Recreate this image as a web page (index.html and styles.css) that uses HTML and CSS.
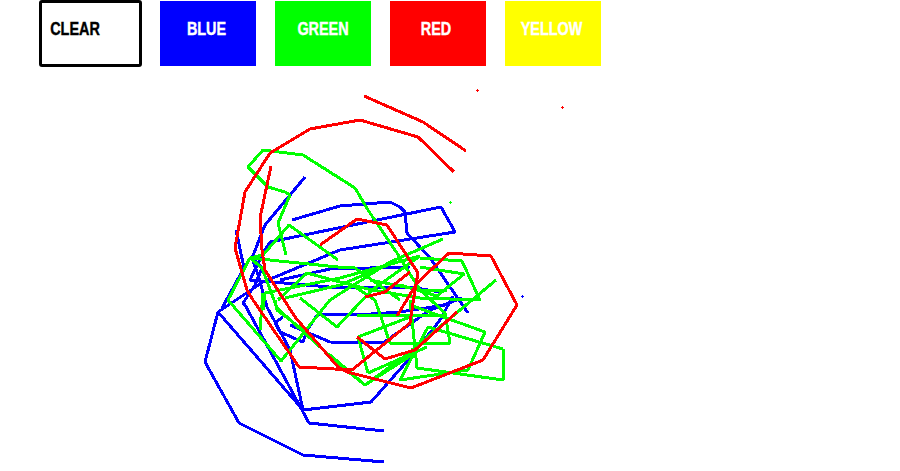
FILE: index.html
```html
<!DOCTYPE html>
<html lang="en">
<head>
    <meta charset="UTF-8">
    <meta name="viewport" content="width=device-width, initial-scale=1.0">
    <title>Air Canvas</title>
    <link rel="stylesheet" href="styles.css">
</head>
<body>
    <div class="toolbar">
        <div class="btn btn-clear"><span>CLEAR</span></div>
        <div class="btn btn-blue"><span>BLUE</span></div>
        <div class="btn btn-green"><span>GREEN</span></div>
        <div class="btn btn-red"><span>RED</span></div>
        <div class="btn btn-yellow"><span>YELLOW</span></div>
    </div>

    <svg class="canvas" viewBox="0 67 900 404" width="900" height="404">
        <g class="ink ink-blue">
            <polyline points="384,462 303,455 239,423 205,362 218,312 263,282 340,250 455,232 441,207 377,220 270,242 263,253 250,280 340,288 410,287 440,292"/>
            <polyline points="218,312 303,410 371,402 410,358 440,320 453,296"/>
            <polyline points="384,431 309,423 275,360 245,305 243,303 255,285 262,268 252,258 265,225 305,177"/>
            <polyline points="252,258 258,275 267,307 290,350 303,410"/>
            <polyline points="292,220 340,206 390,202 400,207 405,212 407,233 430,258 468,313"/>
            <polyline points="236,230 244,268 222,308"/>
            <polyline points="283,317 275,323 280,332 303,342 307,330 318,314 357,315 400,312 445,305"/>
            <polyline points="290,325 330,342 383,343 430,310 462,298"/>
            <polyline points="280,280 330,269 410,267"/>
        </g>
        <g class="ink ink-green">
            <polyline points="286,255 278,223 290,195 285,192 268,187 248,167 263,150 303,155 355,188 368,210 397,253 420,290 445,313 450,343 390,343 375,300 352,285"/>
            <polyline points="338,260 289,225 263,255 250,258 228,300 281,361 330,300 390,262 443,239"/>
            <polyline points="400,300 355,268 338,267 250,258 262,268 277,308 340,365 365,385 413,350"/>
            <polyline points="503,349 428,327 400,380 468,370 485,332 410,305"/>
            <polyline points="503,349 503,380 417,368 410,300"/>
            <polyline points="357,315 447,315"/>
            <polyline points="368,373 358,337 410,317"/>
            <polyline points="368,373 427,347"/>
            <polyline points="330,355 365,385 412,355"/>
            <polyline points="420,258 462,261 480,300 420,298 372,290"/>
            <polyline points="420,267 464,274 437,296 400,285"/>
            <polyline points="496,280 460,310 412,350"/>
            <polyline points="263,293 260,330"/>
            <polyline points="263,310 265,293 340,278 420,256"/>
            <polyline points="300,298 337,327 372,290 420,256"/>
            <polyline points="278,300 307,273 340,282 372,290"/>
            <polyline points="285,298 340,285 395,262"/>
            <polyline points="275,300 277,310 307,333"/>
            <polyline points="370,280 420,290 447,290"/>
        </g>
        <g class="ink ink-red">
            <polyline points="364,96 423,122 466,151"/>
            <polyline points="454,172 418,137 360,120 310,129 270,153 245,192 235,248 247,290 253,300 299,367 352,370 410,323 415,290 418,273 387,225 357,219 320,245"/>
            <polyline points="271,166 260,218 262,250 265,270 295,317 338,367 347,372 411,388 483,360 517,305 491,256 449,253 417,283 397,316"/>
            <polyline points="410,272 385,292 365,297"/>
            <polyline points="357,337 385,359 415,350 457,312"/>
        </g>
        <g class="dots">
            <path class="dot-red" d="M476 90.5h3M477.5 89v3M561 107.5h3M562.5 106v3"/>
            <path class="dot-green" d="M449 202.5h3M450.5 201v3"/>
            <path class="dot-blue" d="M521 296.5h3M522.5 295v3"/>
        </g>
    </svg>
</body>
</html>
```

FILE: styles.css
```css
body {
    margin: 0;
    background-color: #fff;
    overflow: hidden;
    font-family: "Liberation Sans", Arial, sans-serif;
}

.toolbar {
    display: flex;
    align-items: flex-start;
    gap: 19px;
    height: 67px;
    padding-left: 39px;
}

.btn {
    box-sizing: border-box;
    display: flex;
    align-items: center;
    justify-content: center;
    width: 96px;
    height: 65px;
    margin-top: 1px;
    color: #fff;
    font-size: 18px;
    font-weight: bold;
    line-height: 1;
    padding-bottom: 9px;
    padding-right: 4px;
}

.btn span {
    display: inline-block;
    transform: scaleX(0.8);
    -webkit-text-stroke: 0.4px currentColor;
}

.btn-clear {
    width: 103px;
    height: 67px;
    margin-top: 0;
    margin-right: -1px;
    justify-content: flex-start;
    border: 3px solid #000;
    border-radius: 3px;
    color: #000;
    padding-left: 2px;
    padding-right: 0;
    padding-bottom: 9px;
}

.btn-blue { background-color: #00f; }
.btn-green { background-color: #0f0; padding-right: 0; }
.btn-red { background-color: #f00; }
.btn-yellow { background-color: #ff0; }

.canvas {
    display: block;
}

.ink polyline {
    fill: none;
    stroke-width: 3;
    stroke-linejoin: round;
    shape-rendering: crispEdges;
}

.ink-blue polyline { stroke: #00f; }
.ink-green polyline { stroke: #0f0; }
.ink-red polyline { stroke: #f00; }

.dots path {
    fill: none;
    stroke-width: 1;
    shape-rendering: crispEdges;
}

.dot-red { stroke: #f00; }
.dot-green { stroke: #0f0; }
.dot-blue { stroke: #00f; }
```
